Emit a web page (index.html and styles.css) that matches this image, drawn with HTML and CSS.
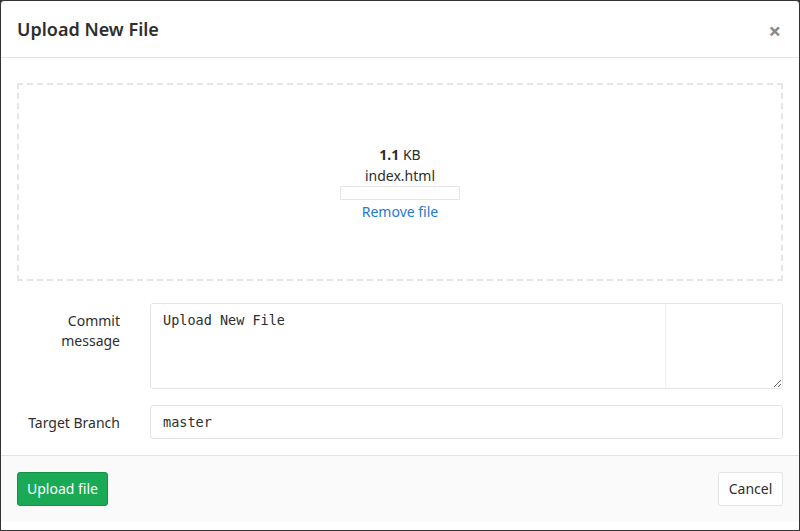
FILE: index.html
```html
<!DOCTYPE html>
<html>
<head>
<meta charset="utf-8">
<link rel="stylesheet" href="styles.css">
</head>
<body>
<div class="modal">
  <div class="modal-header">
    <h3 class="modal-title">Upload New File</h3>
    <span class="close">&times;</span>
  </div>
  <div class="modal-body">
    <div class="dropzone">
      <div class="preview">
        <div class="size"><strong>1.1</strong> KB</div>
        <div class="filename">index.html</div>
        <div class="progress"></div>
        <a class="remove" href="#">Remove file</a>
      </div>
    </div>
    <div class="form-row">
      <label class="label">Commit<br>message</label>
      <div class="field">
        <textarea class="textarea">Upload New File</textarea>
        <span class="gutter"></span>
      </div>
    </div>
    <div class="form-row">
      <label class="label">Target Branch</label>
      <div class="field">
        <input class="input" type="text" value="master">
      </div>
    </div>
  </div>
  <div class="modal-footer">
    <button class="btn btn-success">Upload file</button>
    <button class="btn btn-cancel">Cancel</button>
  </div>
</div>
</body>
</html>
```

FILE: styles.css
```css
* { box-sizing: border-box; }
html, body { margin: 0; padding: 0; }
body {
  background: #333;
  font-family: "Noto Sans", "Open Sans", sans-serif;
  font-size: 14px;
  color: #2e2e2e;
  width: 800px;
  height: 531px;
  overflow: hidden;
}
.modal {
  width: 800px;
  height: 531px;
  background: #fff;
  border: 1px solid #333;
  border-radius: 4px 4px 0 0;
  display: flex;
  flex-direction: column;
}
.modal-header {
  height: 57px;
  padding: 0 16px;
  border-bottom: 1px solid #e5e5e5;
  display: flex;
  align-items: center;
  justify-content: space-between;
}
.modal-title {
  margin: 0;
  font-size: 18px;
  font-weight: 600;
  line-height: 24px;
}
.close {
  font-size: 22px;
  font-weight: 700;
  color: #888;
  line-height: 1;
  margin-right: 2px;
  margin-top: 2px;
}
.modal-body {
  padding: 25px 16px 0 16px;
  flex: 1;
}
.dropzone {
  height: 198px;
  border: 2px dashed #e5e5e5;
  display: flex;
  align-items: center;
  justify-content: center;
  margin-bottom: 22px;
}
.preview {
  display: flex;
  flex-direction: column;
  align-items: center;
  line-height: 20px;
  padding-top: 2px;
}
.size strong { font-weight: 700; }
.filename { margin-top: 1px; }
.progress {
  width: 120px;
  height: 14px;
  border: 1px solid #e5e5e5;
  margin: 0 0 2px 0;
}
.remove {
  color: #1f78d1;
  text-decoration: none;
}
.form-row {
  display: flex;
  margin-bottom: 16px;
}
.label {
  width: 133px;
  padding-right: 30px;
  padding-top: 8px;
  text-align: right;
  line-height: 20px;
  flex-shrink: 0;
}
.field {
  flex: 1;
  position: relative;
}
.textarea {
  display: block;
  width: 100%;
  height: 86px;
  border: 1px solid #e5e5e5;
  border-radius: 3px;
  padding: 7px 12px;
  font-family: "DejaVu Sans Mono", monospace;
  font-size: 13.5px;
  line-height: 18px;
  color: #2e2e2e;
  resize: vertical;
  outline: none;
}
.gutter {
  position: absolute;
  top: 1px;
  bottom: 1px;
  left: 515px;
  width: 1px;
  background: #f0f0f0;
}
.input {
  display: block;
  width: 100%;
  height: 34px;
  border: 1px solid #e5e5e5;
  border-radius: 3px;
  padding: 0 12px;
  font-family: "DejaVu Sans Mono", monospace;
  font-size: 13.5px;
  color: #2e2e2e;
  outline: none;
}
.modal-footer {
  height: 67px;
  margin-bottom: 8px;
  background: #fafafa;
  border-top: 1px solid #e5e5e5;
  padding: 0 16px;
  display: flex;
  align-items: center;
  justify-content: space-between;
}
.btn {
  height: 34px;
  padding: 0;
  font-family: "Noto Sans", "Open Sans", sans-serif;
  font-size: 14px;
  border-radius: 3px;
  line-height: 20px;
  white-space: nowrap;
  text-align: center;
}
.btn-success {
  background: #1aaa55;
  border: 1px solid #168f48;
  color: #fff;
  width: 91px;
}
.btn-cancel {
  background: #fff;
  border: 1px solid #e5e5e5;
  color: #2e2e2e;
  width: 65px;
}
```
